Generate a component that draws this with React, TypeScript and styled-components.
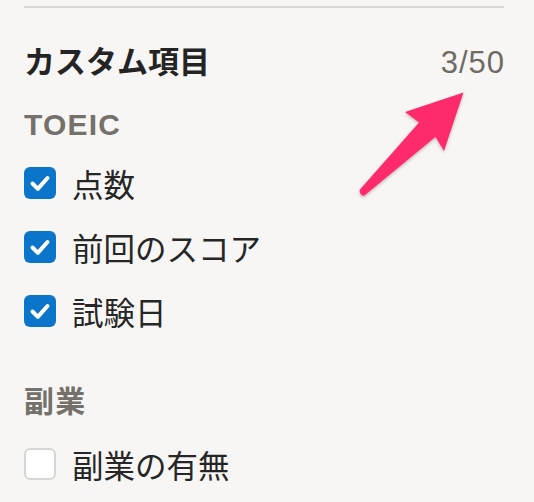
import React from "react";
import styled, { createGlobalStyle } from "styled-components";

const Global = createGlobalStyle`
  html, body { margin: 0; padding: 0; background: #f7f6f4; }
  body { font-family: "Liberation Sans", "Noto Sans CJK JP", sans-serif; color: #262626; }
`;

const Page = styled.div`
  position: relative;
  width: 534px;
  height: 502px;
  overflow: hidden;
  padding: 6px 30px 0 24px;
  box-sizing: border-box;
  display: flex;
  flex-direction: column;
`;

const Divider = styled.div`
  height: 2px;
  background: #d9d7d4;
`;

const HeaderRow = styled.div`
  margin-top: 30px;
  height: 44px;
  display: flex;
  justify-content: space-between;
  align-items: baseline;
`;

const Title = styled.h2`
  margin: 0;
  font-family: "Noto Sans CJK JP", sans-serif;
  font-size: 31px;
  font-weight: 700;
  line-height: 44px;
  color: #242424;
`;

const Count = styled.span`
  font-family: "Liberation Sans", sans-serif;
  font-size: 31px;
  line-height: 44px;
  color: #6e6b65;
  letter-spacing: 1px;
  margin-right: -1px;
`;

const GroupHeading = styled.h3<{ $gap: number }>`
  margin: ${(p) => p.$gap}px 0 0;
  height: 40px;
  line-height: 40px;
  font-family: "Liberation Sans", "Noto Sans CJK JP", sans-serif;
  font-size: 30px;
  font-weight: 700;
  color: #74716a;
  letter-spacing: 1.2px;
`;

const List = styled.div<{ $gap: number }>`
  margin-top: ${(p) => p.$gap}px;
  display: flex;
  flex-direction: column;
`;

const Row = styled.label`
  height: 64px;
  display: flex;
  align-items: center;
  gap: 16px;
`;

const Box = styled.span<{ $checked: boolean }>`
  width: 32px;
  height: 32px;
  box-sizing: border-box;
  border-radius: 6px;
  display: flex;
  align-items: center;
  justify-content: center;
  background: ${(p) => (p.$checked ? "#0b76c9" : "#ffffff")};
  border: ${(p) => (p.$checked ? "none" : "2px solid #d7d5d2")};
  flex: none;
`;

const Label = styled.span`
  font-family: "Noto Sans CJK JP", sans-serif;
  font-size: 31.5px;
  line-height: 40px;
  color: #262626;
`;

const ArrowSvg = styled.svg`
  position: absolute;
  left: 0;
  top: 0;
  pointer-events: none;
`;

const Check = () => (
  <svg width="32" height="32" viewBox="0 0 32 32">
    <polyline
      points="8.5,16.5 13.8,21.8 23.5,11"
      fill="none"
      stroke="#fff"
      strokeWidth="4"
      strokeLinecap="round"
      strokeLinejoin="round"
    />
  </svg>
);

const Item = ({ checked, label }: { checked: boolean; label: string }) => (
  <Row>
    <Box $checked={checked}>{checked && <Check />}</Box>
    <Label>{label}</Label>
  </Row>
);

export default function App() {
  return (
    <>
      <Global />
      <Page>
        <Divider />
        <HeaderRow>
          <Title>カスタム項目</Title>
          <Count>3/50</Count>
        </HeaderRow>
        <GroupHeading $gap={23}>TOEIC</GroupHeading>
        <List $gap={6}>
          <Item checked label="点数" />
          <Item checked label="前回のスコア" />
          <Item checked label="試験日" />
        </List>
        <GroupHeading $gap={39}>副業</GroupHeading>
        <List $gap={10}>
          <Item checked={false} label="副業の有無" />
        </List>
        <ArrowSvg width="534" height="502" viewBox="0 0 534 502">
          <defs>
            <filter id="sh" x="-20%" y="-20%" width="140%" height="140%">
              <feDropShadow dx="0" dy="1.5" stdDeviation="1.5" floodColor="#000" floodOpacity="0.25" />
            </filter>
          </defs>
          <path
            d="M359.5 190 L419 122.5 L405 112 L463.5 92.5 L444 151 L435.5 137 L364.5 195.5 Q360 196.5 359.5 190 Z"
            fill="#ff2a6c"
            filter="url(#sh)"
          />
        </ArrowSvg>
      </Page>
    </>
  );
}
